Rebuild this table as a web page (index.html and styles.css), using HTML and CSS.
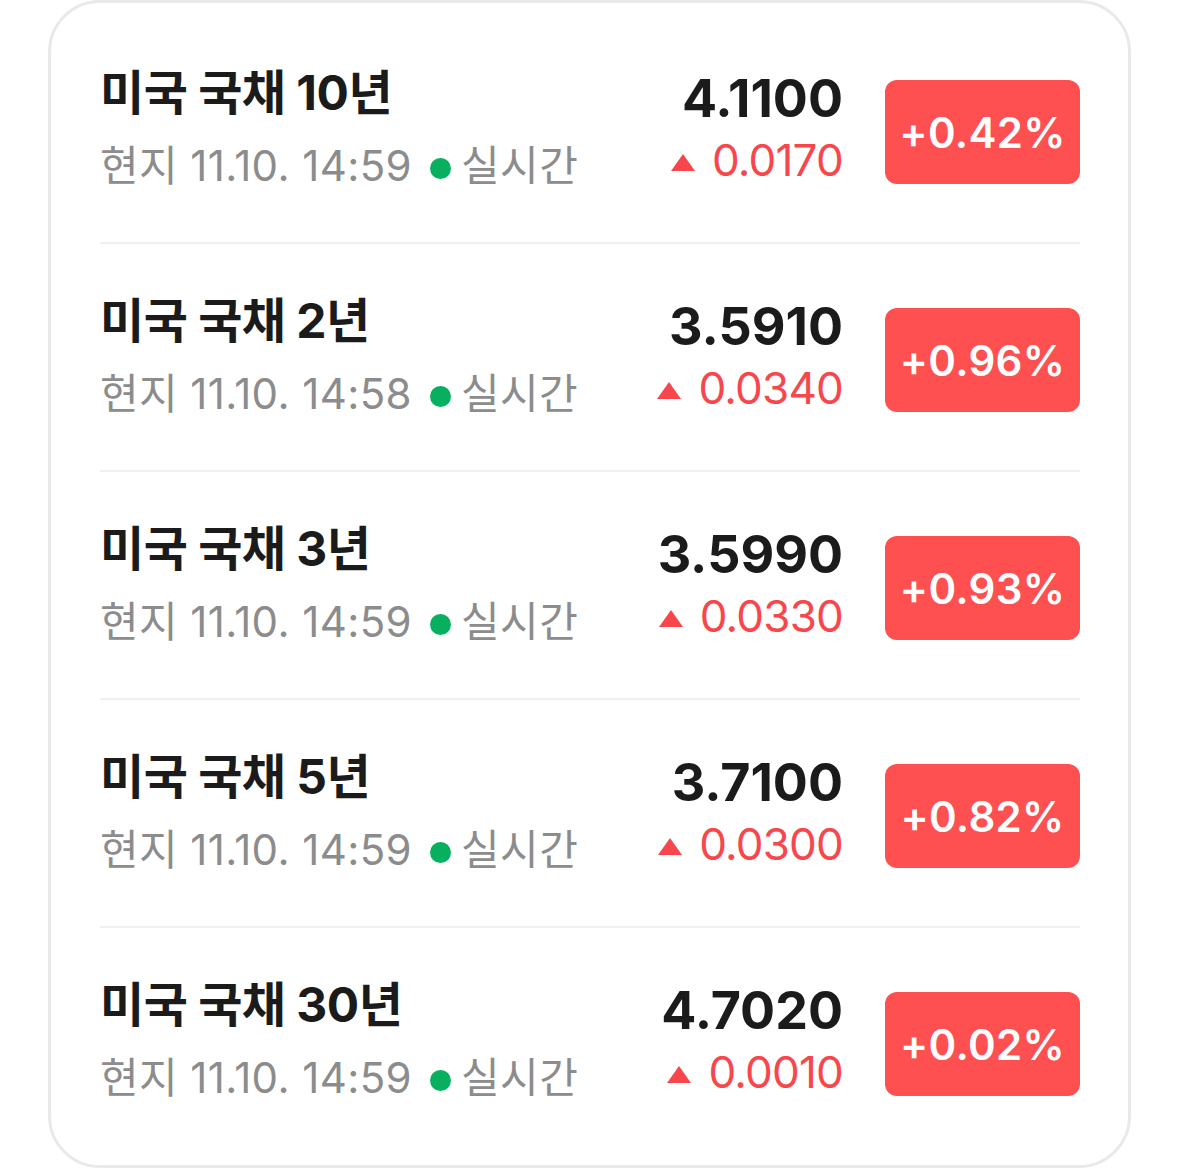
FILE: index.html
```
<!DOCTYPE html>
<html lang="ko">
<head>
<meta charset="utf-8">
<link rel="stylesheet" href="styles.css">
</head>
<body>
<div class="card">
  <div class="row">
    <div class="info">
      <div class="title">미국 국채 10년</div>
      <div class="meta">현지 11.10. 14:59<span class="dot"></span><span class="live">실시간</span></div>
    </div>
    <div class="price">
      <div class="value">4.1100</div>
      <div class="change"><span class="tri"></span>0.0170</div>
    </div>
    <div class="badge">+0.42%</div>
  </div>
  <div class="row">
    <div class="info">
      <div class="title">미국 국채 2년</div>
      <div class="meta">현지 11.10. 14:58<span class="dot"></span><span class="live">실시간</span></div>
    </div>
    <div class="price">
      <div class="value">3.5910</div>
      <div class="change"><span class="tri"></span>0.0340</div>
    </div>
    <div class="badge">+0.96%</div>
  </div>
  <div class="row">
    <div class="info">
      <div class="title">미국 국채 3년</div>
      <div class="meta">현지 11.10. 14:59<span class="dot"></span><span class="live">실시간</span></div>
    </div>
    <div class="price">
      <div class="value">3.5990</div>
      <div class="change"><span class="tri"></span>0.0330</div>
    </div>
    <div class="badge">+0.93%</div>
  </div>
  <div class="row">
    <div class="info">
      <div class="title">미국 국채 5년</div>
      <div class="meta">현지 11.10. 14:59<span class="dot"></span><span class="live">실시간</span></div>
    </div>
    <div class="price">
      <div class="value">3.7100</div>
      <div class="change"><span class="tri"></span>0.0300</div>
    </div>
    <div class="badge">+0.82%</div>
  </div>
  <div class="row last">
    <div class="info">
      <div class="title">미국 국채 30년</div>
      <div class="meta">현지 11.10. 14:59<span class="dot"></span><span class="live">실시간</span></div>
    </div>
    <div class="price">
      <div class="value">4.7020</div>
      <div class="change"><span class="tri"></span>0.0010</div>
    </div>
    <div class="badge">+0.02%</div>
  </div>
</div>
</body>
</html>
```
FILE: styles.css
```
html, body {
  margin: 0;
  padding: 0;
  background: #ffffff;
}
body {
  font-family: Inter, "Noto Sans CJK KR", sans-serif;
  height: 1168px;
  overflow: hidden;
}
.card {
  margin-left: 48px;
  width: 1083px;
  box-sizing: border-box;
  border: 3px solid #e9e9e9;
  border-radius: 52px;
  padding: 13px 48px 0 49px;
  height: 1168px;
}
.row {
  display: flex;
  align-items: flex-start;
  height: 228px;
  box-sizing: border-box;
  border-bottom: 2px solid #f0f0f0;
}
.row.last {
  border-bottom: none;
}
.info {
  flex: 1;
  padding-top: 45px;
}
.title {
  font-size: 48px;
  font-weight: 700;
  color: #1b1b1b;
  line-height: 64px;
  letter-spacing: -0.5px;
  white-space: nowrap;
}
.meta {
  font-size: 42px;
  font-weight: 400;
  color: #8c8c8c;
  line-height: 60px;
  letter-spacing: 0.4px;
  margin-top: 11px;
  display: flex;
  align-items: center;
  white-space: pre;
}
.dot {
  width: 21px;
  height: 21px;
  border-radius: 50%;
  background: #07b05f;
  margin: 4px 10px 0 18px;
}
.price {
  text-align: right;
  padding-top: 55px;
}
.value {
  font-size: 52px;
  font-weight: 700;
  color: #1b1b1b;
  line-height: 56px;
  letter-spacing: 0;
}
.change {
  font-size: 44px;
  font-weight: 400;
  color: #f8474c;
  line-height: 56px;
  letter-spacing: -0.8px;
  margin-top: 5px;
  display: flex;
  align-items: center;
  justify-content: flex-end;
}
.tri {
  width: 0;
  height: 0;
  border-left: 12px solid transparent;
  border-right: 12px solid transparent;
  border-bottom: 17px solid #f8474c;
  margin: 4px 17px 0 0;
}
.badge {
  margin-top: 64px;
  margin-left: 42px;
  width: 195px;
  height: 104px;
  border-radius: 12px;
  background: #fe4f51;
  color: #ffffff;
  font-size: 42px;
  font-weight: 600;
  display: flex;
  align-items: center;
  justify-content: center;
  letter-spacing: 0.3px;
}
```
